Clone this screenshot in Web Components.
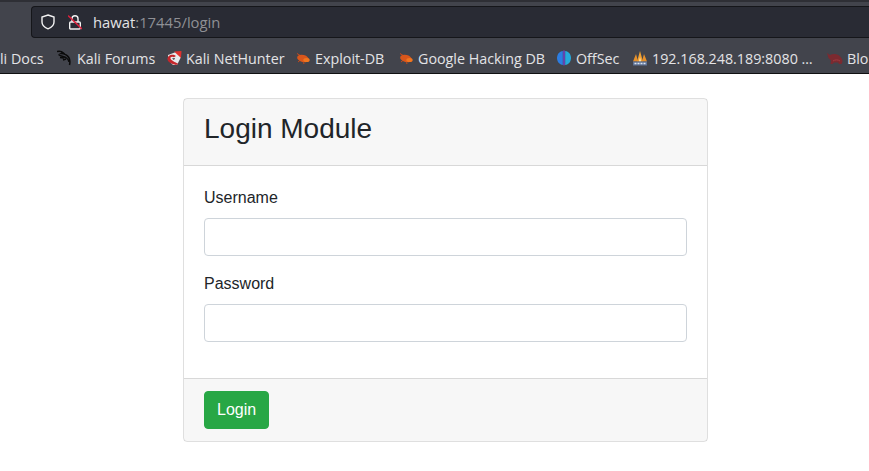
<!DOCTYPE html>
<html>
<head>
<meta charset="utf-8">
<title>Login Module</title>
<style>
    html, body { margin: 0; padding: 0; background: #fff; overflow: hidden; }
    body { width: 869px; height: 471px; }
</style>
</head>
<body>
<browser-chrome url-host="hawat" url-rest=":17445/login">
    <book-mark label="li Docs" width="45"></book-mark>
    <book-mark label="Kali Forums" icon="dragon" width="77"></book-mark>
    <book-mark label="Kali NetHunter" icon="hunter" width="97"></book-mark>
    <book-mark label="Exploit-DB" icon="bug" width="71"></book-mark>
    <book-mark label="Google Hacking DB" icon="bug" width="126"></book-mark>
    <book-mark label="OffSec" icon="offsec" width="44"></book-mark>
    <book-mark label="192.168.248.189:8080 …" icon="pfsense" width="163"></book-mark>
    <book-mark label="Blo" icon="bull" width="30"></book-mark>
</browser-chrome>
<main-page>
    <login-card title="Login Module">
        <form-field label="Username"></form-field>
        <form-field label="Password" type="password"></form-field>
        <submit-button slot="footer">Login</submit-button>
    </login-card>
</main-page>

<script>
const icons = {
    dragon: `<g fill="none" stroke="#0a0a0a" stroke-width="1.500"><path d="M0 1.500c2.500-.5 5 0 6.500 1.500-1-.2-1.800 0-2.500.5 3.300.2 6.300 1.700 7.800 4 1.400 2.300 1.400 4.500.7 7.500"/><path d="M1.500 4.500c2.500 2 6 2 8 3.500 1.500 1 2.300 2.500 2.500 4"/><path d="M3 7.500l4 .5M6 10l3-1"/></g>`,
    hunter: `<path d="M2 5l8-3 5 5-4 8-4 0-5-5z" fill="#e8eaec"/><path d="M8 1.500L15.500 1 15 8z" fill="#e0312e"/><path d="M1.500 9.500C1 5.500 6.500 3 10 6l-2 1.200C6 6 4 7 4.500 8.500c.6 2 4.500 3.500 8 5.500l-2.500 1C6 14 2 12.500 1.500 9.500z" fill="#c4262b"/><path d="M6 8.500l3-.5-1 2z" fill="#2e2e32"/>`,
    bug: `<path d="M2 3.500l4 2.500M3 12l3-2.500M8.500 12.500l.5 1.500M14 11.500l-2-1.500" stroke="#c8481a"/><ellipse cx="8" cy="8.500" rx="6" ry="3.500" transform="rotate(15 8 8.500)" fill="#d9561b"/><ellipse cx="11.500" cy="10" rx="3.200" ry="2" fill="#f0761f"/>`,
    offsec: `<path d="M6.800 1C3.300 1.600 1 4.300 1 8s2.300 6.400 5.800 7z" fill="#2c7de2"/><path d="M9.200 1c3.500.6 5.800 3.300 5.800 7s-2.300 6.400-5.800 7z" fill="#26a9dc"/><path d="M7.300 .5h1.400v14l-.7 1.500-.7-1.500z" fill="#7444d8"/>`,
    pfsense: `<path d="M1 11.500L4 4l2 7.500z" fill="#e8912a"/><path d="M5 11.500L8 1l3 10.500z" fill="#f0a030"/><path d="M10 11.500L12 4l3 7.500z" fill="#e8912a"/><path d="M6.800 11.500L8 7l1.200 4.500z" fill="#fbe3b5"/><rect x="1" y="11.500" width="14" height="4" fill="#5f7396"/><path d="M2.500 13.500h11" stroke="#dfe6f0" stroke-width="1.400" stroke-dasharray="2 1"/>`,
    bull: `<path d="M0 3l3 2c3-1.500 7-1 9 .5 2 1.500 3.500 3.500 3.500 6l-1 2.500h-2.500l-1-1.500H7L5.500 14H3.500l.5-3.500L1.500 8z" fill="#7b2a30"/><path d="M6 11c2-1.500 5-1.500 7 0" stroke="#a33a40" fill="none"/>`
};

class BookMark extends HTMLElement {
    constructor() {
        super();
        this.attachShadow({ mode: 'open' });
        const icon = this.getAttribute('icon');
        this.shadowRoot.innerHTML = `
            <style>
                :host { display: flex; align-items: center; flex: none; gap: 4px; }
                svg { width: 16px; height: 16px; flex: none; }
                span { white-space: nowrap; width: ${this.getAttribute('width')}px; }
            </style>
            ${icon ? `<svg viewBox="0 0 16 16">${icons[icon]}</svg>` : ''}
            <span>${this.getAttribute('label')}</span>
        `;
    }
}
customElements.define('book-mark', BookMark);

class BrowserChrome extends HTMLElement {
    constructor() {
        super();
        this.attachShadow({ mode: 'open' });
        this.shadowRoot.innerHTML = `
            <style>
                :host {
                    display: block;
                    background: #42444c;
                    font: 14.3px "Open Sans", "Noto Sans", sans-serif;
                    color: #e3e3e6;
                    height: 74px;
                    overflow: hidden;
                }

                #top {
                    height: 38px;
                    box-sizing: border-box;
                    border-top: 2px solid #2e2f35;
                    padding: 4px 0 0 31px;
                }

                #urlbar {
                    height: 32px;
                    box-sizing: border-box;
                    background: #292b34;
                    border: 1px solid #15161a;
                    border-right: 0;
                    border-radius: 4px 0 0 4px;
                    display: flex;
                    align-items: center;
                    padding-left: 8px;
                }

                #lock { margin-left: 12px; }
                #url { margin-left: 11px; white-space: nowrap; font-size: 14.8px; }
                #rest { color: #8f9095; }

                #bookmarks {
                    height: 36px;
                    box-sizing: border-box;
                    border-bottom: 1px solid #101012;
                    display: flex;
                    align-items: center;
                    gap: 12px;
                    padding-top: 5px;
                    overflow: hidden;
                }
            </style>
            <div id="top">
                <div id="urlbar">
                    <svg width="16" height="16" viewBox="0 0 16 16" fill="none" stroke="#f2f2f2" stroke-width="1.400">
                        <path d="M8 1l6 2v5c0 3.300-2.500 5.500-6 6.800-3.500-1.300-6-3.500-6-6.800V3z"/>
                    </svg>
                    <svg id="lock" width="14" height="15" viewBox="0 0 14 15" fill="none">
                        <path d="M4 7V3.700a3 3 0 0 1 6 0V7" stroke="#f2f2f2" stroke-width="1.400"/>
                        <rect x="1.700" y="7" width="10.600" height="7" rx="1" stroke="#f2f2f2" stroke-width="1.400"/>
                        <path d="M0 0.500l14 13.500" stroke="#e0203c" stroke-width="1.500"/>
                    </svg>
                    <span id="url"><span id="host">${this.getAttribute('url-host')}</span><span id="rest">${this.getAttribute('url-rest')}</span></span>
                </div>
            </div>
            <div id="bookmarks"><slot></slot></div>
        `;
    }
}
customElements.define('browser-chrome', BrowserChrome);

class MainPage extends HTMLElement {
    constructor() {
        super();
        this.attachShadow({ mode: 'open' });
        this.shadowRoot.innerHTML = `
            <style>
                :host {
                    display: flex;
                    justify-content: flex-start;
                    padding: 24px 0 0 183px;
                    background: #fff;
                    font: 16px/24px "Liberation Sans", Arial, sans-serif;
                    color: #212529;
                }
            </style>
            <slot></slot>
        `;
    }
}
customElements.define('main-page', MainPage);

class LoginCard extends HTMLElement {
    constructor() {
        super();
        this.attachShadow({ mode: 'open' });
        this.shadowRoot.innerHTML = `
            <style>
                :host {
                    display: block;
                    width: 525px;
                    box-sizing: border-box;
                    border: 1px solid rgba(0, 0, 0, 0.125);
                    border-radius: 4px;
                }

                header {
                    background: rgba(0, 0, 0, 0.03);
                    border-bottom: 1px solid rgba(0, 0, 0, 0.125);
                    padding: 13px 20px 12px;
                }

                h3 {
                    margin: 0 0 7px;
                    font-size: 28px;
                    font-weight: 400;
                    line-height: 33.6px;
                }

                #body { padding: 20px; }

                footer {
                    background: rgba(0, 0, 0, 0.03);
                    border-top: 1px solid rgba(0, 0, 0, 0.125);
                    padding: 12px 20px;
                    display: flex;
                }
            </style>
            <header><h3>${this.getAttribute('title')}</h3></header>
            <div id="body"><slot></slot></div>
            <footer><slot name="footer"></slot></footer>
        `;
    }
}
customElements.define('login-card', LoginCard);

class FormField extends HTMLElement {
    constructor() {
        super();
        this.attachShadow({ mode: 'open' });
        this.shadowRoot.innerHTML = `
            <style>
                :host { display: block; margin-bottom: 16px; }
                label { display: block; margin-bottom: 8px; }
                input {
                    display: block;
                    width: 100%;
                    height: 38px;
                    box-sizing: border-box;
                    border: 1px solid #ced4da;
                    border-radius: 4px;
                    background: #fff;
                    padding: 6px 12px;
                    font: inherit;
                    outline: none;
                }
            </style>
            <label>${this.getAttribute('label')}</label>
            <input type="${this.getAttribute('type') || 'text'}">
        `;
    }
}
customElements.define('form-field', FormField);

class SubmitButton extends HTMLElement {
    constructor() {
        super();
        this.attachShadow({ mode: 'open' });
        this.shadowRoot.innerHTML = `
            <style>
                :host { display: block; }
                button {
                    display: block;
                    height: 38px;
                    box-sizing: border-box;
                    background: #28a745;
                    color: #fff;
                    border: 1px solid #28a745;
                    border-radius: 4px;
                    padding: 6px 12px;
                    font: inherit;
                }
            </style>
            <button><slot></slot></button>
        `;
    }
}
customElements.define('submit-button', SubmitButton);
</script>
</body>
</html>
